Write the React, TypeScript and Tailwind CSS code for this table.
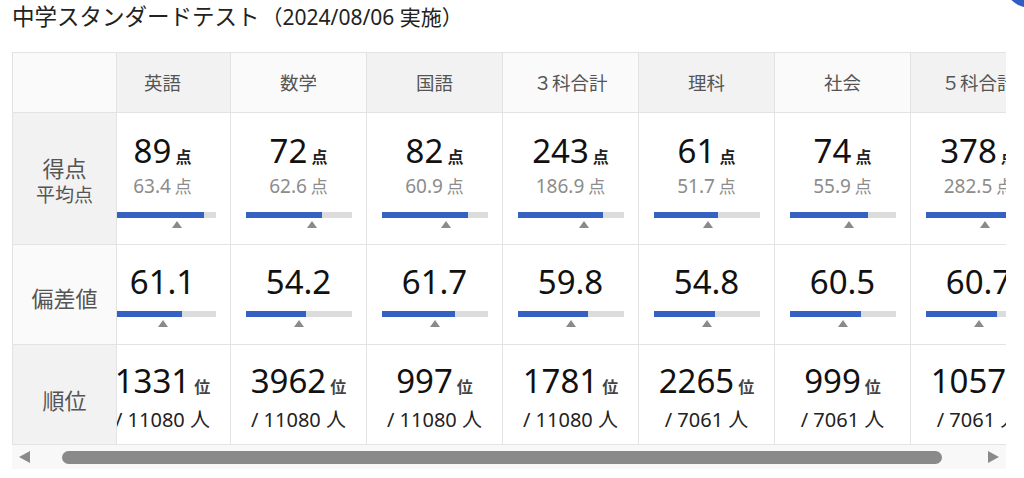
import { useLayoutEffect, useRef } from "react";

type Subj = {
  name: string;
  score: number;
  avg: number;
  max: number;
  dev: number;
  rank: number;
  total: number;
};

const subjects: Subj[] = [
  { name: "英語", score: 89, avg: 63.4, max: 100, dev: 61.1, rank: 1331, total: 11080 },
  { name: "数学", score: 72, avg: 62.6, max: 100, dev: 54.2, rank: 3962, total: 11080 },
  { name: "国語", score: 82, avg: 60.9, max: 100, dev: 61.7, rank: 997, total: 11080 },
  { name: "３科合計", score: 243, avg: 186.9, max: 300, dev: 59.8, rank: 1781, total: 11080 },
  { name: "理科", score: 61, avg: 51.7, max: 100, dev: 54.8, rank: 2265, total: 7061 },
  { name: "社会", score: 74, avg: 55.9, max: 100, dev: 60.5, rank: 999, total: 7061 },
  { name: "５科合計", score: 378, avg: 282.5, max: 500, dev: 60.7, rank: 1057, total: 7061 },
];

function Bar({ pct, mark }: { pct: number; mark: number }) {
  return (
    <div className="w-[106px]">
      <div className="h-[6px] bg-[#dcdcdc]">
        <div className="h-full bg-[#3562c2]" style={{ width: `${pct}%` }} />
      </div>
      <div className="relative h-[7px] mt-[3px]">
        <div
          className="absolute top-0 -translate-x-1/2 w-0 h-0 border-l-[5px] border-r-[5px] border-b-[7px] border-l-transparent border-r-transparent border-b-[#8a8a8a]"
          style={{ left: `${mark}%` }}
        />
      </div>
    </div>
  );
}

export default function App() {
  const scrollRef = useRef<HTMLDivElement>(null);
  useLayoutEffect(() => {
    if (scrollRef.current) scrollRef.current.scrollLeft = 22;
  }, []);

  const labelBase =
    "sticky left-0 z-10 border-r border-b border-[#e3e3e3] flex flex-col items-center justify-center text-[#555]";
  const cellBase = "border-r border-b border-[#e3e3e3] bg-white flex flex-col items-center";

  return (
    <div className="relative w-[1024px] h-[478px] overflow-hidden bg-white [font-family:'Noto_Sans','Noto_Sans_CJK_JP',sans-serif]">
      <div className="absolute top-[-48px] left-[1003px] w-[56px] h-[56px] rounded-full bg-[#2f5dc2]" />

      <h1 className="pl-3 pt-[2px] h-[52px] text-[22.5px] leading-[30px] text-[#222] font-normal">
        中学スタンダードテスト
        <span className="ml-[2px] text-[21px]">（2024/08/06 実施）</span>
      </h1>

      <div className="ml-3 w-[994px]">
        <div ref={scrollRef} className="overflow-hidden border-l border-t border-[#e3e3e3]">
          <div className="grid grid-cols-[104px_repeat(7,136px)] grid-rows-[60px_132px_100px_100px] w-max">
            {/* header row */}
            <div className="sticky left-0 z-10 border-r border-b border-[#e3e3e3] bg-[#fafafa]" />
            {subjects.map((s, i) => (
              <div
                key={s.name}
                className={`border-r border-b border-[#e3e3e3] flex items-center justify-center text-[18.5px] text-[#555] ${
                  i % 2 === 0 ? "bg-[#f2f2f2]" : "bg-[#fafafa]"
                }`}
              >
                {s.name}
              </div>
            ))}

            {/* score row */}
            <div className={`${labelBase} bg-[#f2f2f2] pt-[4px]`}>
              <div className="text-[22px] leading-[28px]">得点</div>
              <div className="text-[19px] leading-[26px]">平均点</div>
            </div>
            {subjects.map((s) => (
              <div key={s.name + "score"} className={`${cellBase} pt-[19px]`}>
                <div className="flex items-baseline h-[38px]">
                  <span className="text-[33px] leading-[38px] text-[#111]">{s.score}</span>
                  <span className="ml-[4px] text-[16px] leading-[20px] font-bold text-[#222]">点</span>
                </div>
                <div className="mt-[4px] h-[24px] flex items-baseline text-[#8c8c8c]">
                  <span className="text-[19px] leading-[24px]">{s.avg.toFixed(1)}</span>
                  <span className="ml-[4px] text-[17px] leading-[24px]">点</span>
                </div>
                <div className="mt-[14px]">
                  <Bar pct={(s.score / s.max) * 100} mark={(s.avg / s.max) * 100} />
                </div>
              </div>
            ))}

            {/* deviation row */}
            <div className={`${labelBase} bg-[#fafafa] pt-[6px]`}>
              <div className="text-[22px] leading-[28px]">偏差値</div>
            </div>
            {subjects.map((s) => (
              <div key={s.name + "dev"} className={`${cellBase} pt-[18px]`}>
                <div className="text-[33px] leading-[38px] text-[#111]">{s.dev.toFixed(1)}</div>
                <div className="mt-[10px]">
                  <Bar pct={((s.dev - 20) / 60) * 100} mark={50} />
                </div>
              </div>
            ))}

            {/* rank row */}
            <div className={`${labelBase} bg-[#f2f2f2] pt-[10px]`}>
              <div className="text-[22px] leading-[28px]">順位</div>
            </div>
            {subjects.map((s) => (
              <div key={s.name + "rank"} className={`${cellBase} pt-[17px]`}>
                <div className="flex items-baseline h-[38px]">
                  <span className="text-[33px] leading-[38px] text-[#111]">{s.rank}</span>
                  <span className="ml-[4px] text-[16px] leading-[20px] font-bold text-[#444]">位</span>
                </div>
                <div className="mt-[7px] text-[20px] leading-[26px] text-[#222]">
                  / {s.total} 人
                </div>
              </div>
            ))}
          </div>
        </div>

        {/* scrollbar */}
        <div className="flex items-center h-[24px] bg-[#f8f8f8]">
          <div className="w-[25px] flex justify-center">
            <div className="w-0 h-0 border-t-[6px] border-b-[6px] border-r-[11px] border-t-transparent border-b-transparent border-r-[#8a8a8a]" />
          </div>
          <div className="flex-1 pl-[25px]">
            <div className="w-[880px] h-[13px] rounded-full bg-[#8a8a8a]" />
          </div>
          <div className="w-[25px] flex justify-center">
            <div className="w-0 h-0 border-t-[6px] border-b-[6px] border-l-[11px] border-t-transparent border-b-transparent border-l-[#8a8a8a]" />
          </div>
        </div>
      </div>
    </div>
  );
}
